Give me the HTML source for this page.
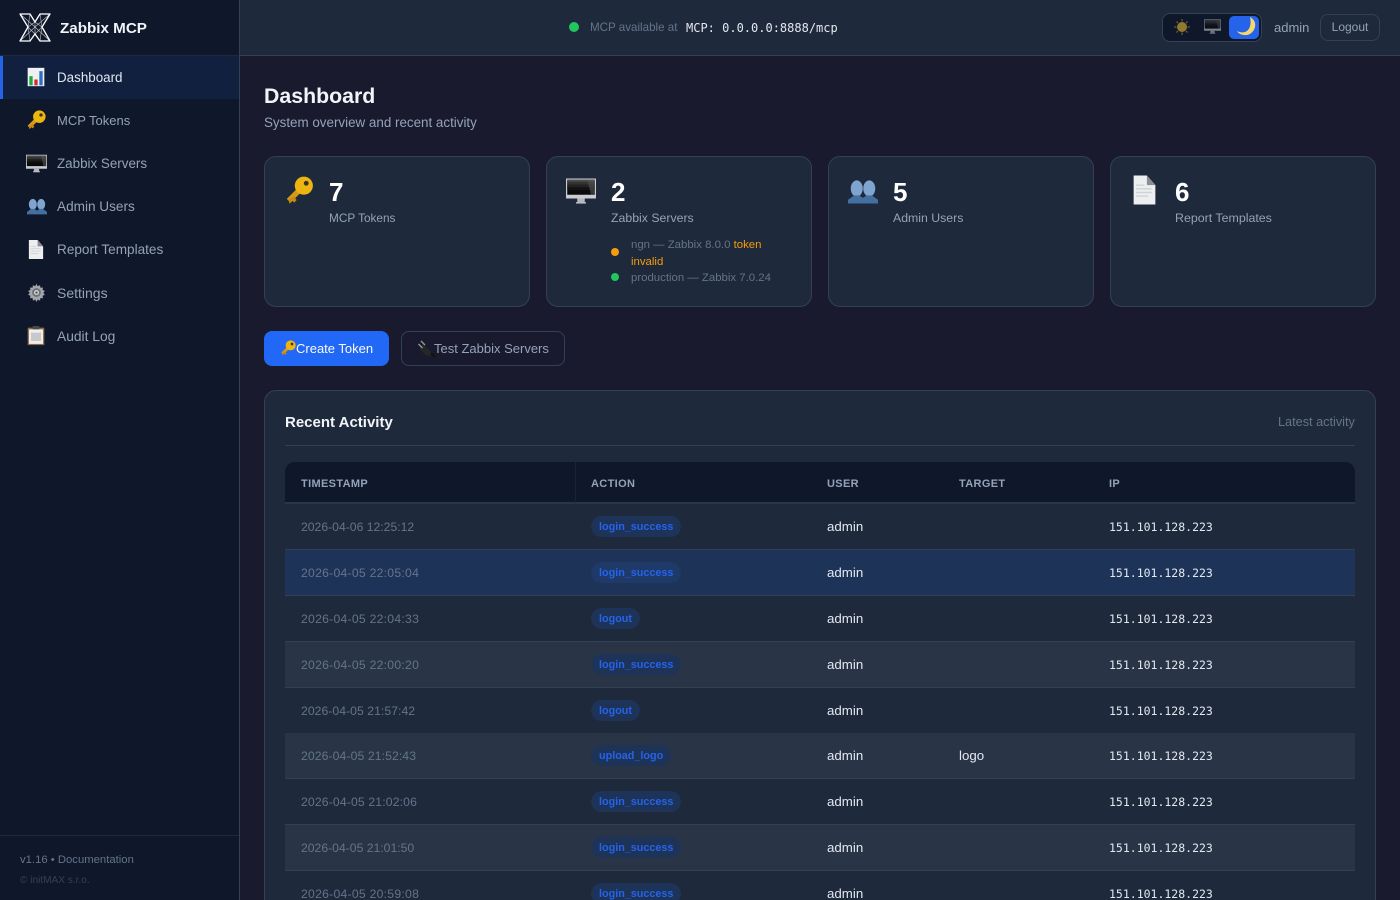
<!DOCTYPE html>
<html lang="en"><head><meta charset="utf-8"><title>Zabbix MCP</title>
<style>
*{box-sizing:border-box}
html,body{margin:0;padding:0;width:1400px;height:900px;overflow:hidden;background:#1a1a2e;font-family:"Liberation Sans",sans-serif;color:#e2e8f0}
#root{position:relative;width:1400px;height:900px;overflow:hidden;background:#1a1a2e}
.a{position:absolute;white-space:nowrap}
.t{position:absolute;white-space:nowrap;line-height:16px}
svg{position:absolute;overflow:visible}
#side{position:absolute;left:0;top:0;width:240px;height:900px;background:#0f172a;border-right:1px solid #334155}
#top{position:absolute;left:240px;top:0;width:1160px;height:56px;background:#1e293b;border-bottom:1px solid #334155}
.nav{font-size:13.6px;color:#94a3b8;left:57px}
.card{position:absolute;top:156px;width:266px;height:151px;background:#1e293b;border:1px solid #334155;border-radius:12px}
.num{font-size:26px;font-weight:700;color:#fff;line-height:30px;position:absolute;top:177px}
.lbl{font-size:12.3px;color:#94a3b8;top:210px}
#panel{position:absolute;left:264px;top:390px;width:1112px;height:540px;background:#1e293b;border:1px solid #334155;border-radius:12px}
.row{position:absolute;left:285px;width:1070px;height:46px;border-bottom:1px solid #334155}
.row.s{background:#293546}
.row.h{background:#1e3358}
.ts{position:absolute;left:16px;top:15px;font-size:12.2px;color:#64748b;line-height:16px;white-space:nowrap}
.bd{position:absolute;left:306px;top:12px;height:21px;border-radius:11px;background:#1e3358;color:#2563eb;font-size:10.8px;font-weight:700;line-height:23px;padding:0 8px;white-space:nowrap}
.row.h .bd{background:#1f3a68}
.us{position:absolute;left:542px;top:15px;font-size:13.3px;color:#e2e8f0;line-height:16px}
.tg{position:absolute;left:674px;top:15px;font-size:13.3px;color:#e2e8f0;line-height:16px}
.ip{position:absolute;left:824px;top:15px;font-family:"DejaVu Sans Mono",monospace;font-size:11.5px;color:#e2e8f0;line-height:16px;white-space:nowrap}
.th{position:absolute;top:476px;font-size:11px;font-weight:700;color:#94a3b8;letter-spacing:.35px;line-height:16px;white-space:nowrap}
</style></head><body><div id="root">
<svg width="0" height="0" style="position:absolute"><defs>
<symbol id="chart" viewBox="0 0 24 24"><rect x="2" y="1" width="20" height="22" fill="#eef1f4"/><rect x="4" y="11" width="4" height="11" fill="#22a83a"/><rect x="10" y="15" width="4" height="7" fill="#cf2e2e"/><rect x="16" y="5" width="4" height="17" fill="#2a6fc9"/></symbol>
<symbol id="key" viewBox="0 0 24 24"><path d="M12 12L3.500 20.500" stroke="#d69a14" stroke-width="4.500"/><path d="M4 23l2.500-2.500 1.500 1.500 2-2-2-3-4.500 2z" fill="#c98a12"/><circle cx="16" cy="8" r="7.500" fill="#ecb512"/><circle cx="18" cy="6" r="2" fill="#3a3320"/></symbol>
<symbol id="mon" viewBox="0 0 24 24"><rect x="0" y="2" width="24" height="16" fill="#c9ccd0"/><rect x="1" y="3" width="22" height="12" fill="#0a0a0a"/><rect x="1" y="3" width="22" height="2" fill="#4a4a4a"/><rect x="1" y="5" width="22" height="2" fill="#343434"/><rect x="1" y="7" width="22" height="2" fill="#222"/><rect x="1" y="9" width="22" height="2" fill="#141414"/><path d="M17 3h6v12h-3z" fill="#555" opacity=".6"/><rect x="9" y="18" width="6" height="3" fill="#b4b7bb"/><rect x="8" y="21" width="8" height="1" fill="#d4d6d9"/></symbol>
<symbol id="users" viewBox="0 0 24 24"><ellipse cx="7" cy="10" rx="4.800" ry="6.500" fill="#7ea4cf"/><ellipse cx="17" cy="10" rx="4.800" ry="6.500" fill="#7ea4cf"/><path d="M0 22v-3l5-3.500h4l3 2 3-2h4l5 3.500v3z" fill="#44709f"/></symbol>
<symbol id="doc" viewBox="0 0 24 24"><path d="M3 0h11l7 8v16H3z" fill="#eceef0"/><path d="M14 0l7 8h-7z" fill="#8b8d90"/><path d="M5 8h7M5 11h13M5 14h13M5 17h10" stroke="#cfd2d5" stroke-width="1.200"/></symbol>
<symbol id="gear" viewBox="0 0 24 24"><path d="M12 1l1.500 3 3-1.200.5 3.200 3.300-.3-.7 3.200 3 1.100-2 2.500 2 2.500-3 1.100.7 3.200-3.300-.3-.5 3.200-3-1.200-1.500 3-1.500-3-3 1.200-.5-3.200-3.300.3.700-3.200-3-1.100 2-2.500-2-2.500 3-1.100-.7-3.200 3.300.3.500-3.200 3 1.200z" fill="#a3a6aa"/><circle cx="12" cy="12" r="5.500" fill="#6d7074"/><circle cx="12" cy="12" r="3.200" fill="#d3d5d8"/><circle cx="12" cy="12" r="1.500" fill="#555"/></symbol>
<symbol id="clip" viewBox="0 0 24 24"><rect x="2" y="2" width="20" height="21" rx="1" fill="#8a6a3f"/><rect x="3.500" y="4" width="17" height="17.500" fill="#eeeeee"/><rect x="6" y="8" width="12" height="10" fill="#c6c8ca"/><rect x="8" y="0" width="8" height="4" fill="#4a4a4a"/></symbol>
</defs></svg>

<div id="side"></div>
<div class="a" style="left:0;top:55px;width:239px;height:1px;background:#1e293b"></div>
<svg style="left:19px;top:13px" width="32" height="29" viewBox="0 0 32 29" fill="none" stroke="#fff" stroke-width="1.300" stroke-linejoin="round"><path d="M1 1l10 0 5 8 5-8 10 0-8 13 8 14-10 0-5-7-5 7-10 0 8-14z"/><path d="M9 14l7-5 7 5-7 7zM16 9v12M11 1l-2 13 2 14M21 1l2 13-2 14M1 1l15 13 15-13M1 28l15-14 15 14" stroke-width=".6" opacity=".75"/></svg>
<div class="t" style="left:60px;top:20px;font-size:15.2px;font-weight:700;color:#f1f5f9;line-height:18px">Zabbix MCP</div>

<div class="a" style="left:0;top:56px;width:239px;height:43px;background:#12203f"></div>
<div class="a" style="left:0;top:56px;width:3px;height:43px;background:#2563eb"></div>
<svg style="left:26px;top:67px" width="20" height="20"><use href="#chart"/></svg>
<div class="t nav" style="top:70px;color:#e2e8f0;font-size:13.4px">Dashboard</div>
<svg style="left:26px;top:110px" width="20" height="20"><use href="#key"/></svg>
<div class="t nav" style="top:113px;font-size:13px">MCP Tokens</div>
<svg style="left:26px;top:153px" width="21" height="21"><use href="#mon"/></svg>
<div class="t nav" style="top:156px;font-size:13.4px">Zabbix Servers</div>
<svg style="left:27px;top:196px" width="20" height="20"><use href="#users"/></svg>
<div class="t nav" style="top:199px">Admin Users</div>
<svg style="left:26px;top:240px" width="20" height="19"><use href="#doc"/></svg>
<div class="t nav" style="top:242px">Report Templates</div>
<svg style="left:27px;top:283px" width="19" height="19"><use href="#gear"/></svg>
<div class="t nav" style="top:285px;font-size:14px">Settings</div>
<svg style="left:26px;top:326px" width="20" height="20"><use href="#clip"/></svg>
<div class="t nav" style="top:329px;font-size:13.8px">Audit Log</div>

<div class="a" style="left:0;top:835px;width:239px;height:1px;background:#1e293b"></div>
<div class="t" style="left:20px;top:852px;font-size:11.3px;color:#64748b">v1.16 • Documentation</div>
<div class="t" style="left:20px;top:873px;font-size:10.1px;color:#334155">© initMAX s.r.o.</div>

<div id="top"></div>
<div class="a" style="left:569px;top:22px;width:10px;height:10px;border-radius:50%;background:#22c55e"></div>
<div class="t" style="left:590px;top:20px;font-size:11.6px;color:#64748b">MCP available at</div>
<div class="t" style="left:686px;top:20px;font-family:'DejaVu Sans Mono',monospace;font-size:12px;color:#e2e8f0">MCP: 0.0.0.0:8888/mcp</div>

<div class="a" style="left:1162px;top:13px;width:100px;height:29px;background:#0f172a;border:1px solid #334155;border-radius:8px"></div>
<svg style="left:1173px;top:18px" width="18" height="18" viewBox="0 0 18 18"><circle cx="9" cy="9" r="5" fill="#8f7a30"/><path d="M9 1v2.500M9 14.500v2.500M1 9h2.500M14.500 9h2.500M3.500 3.500l1.500 1.500M13 13l1.500 1.500M3.500 14.500l1.500-1.500M13 5l1.500-1.500" stroke="#6a5a2c" stroke-width="1.300"/></svg>
<svg style="left:1204px;top:18px;opacity:.6" width="17" height="17"><use href="#mon"/></svg>
<div class="a" style="left:1229px;top:16px;width:30px;height:23px;background:#2563eb;border-radius:5px"></div>
<svg style="left:1236px;top:17px" width="21" height="20" viewBox="0 0 21 20"><path d="M14 0c4 2 6 6 5 10-1 5-6 9-11 8-3 0-6-2-7-4 4 2 8 2 11-1 3-3 3-9 2-13z" fill="#f6d76b"/></svg>
<div class="t" style="left:1274px;top:20px;font-size:13px;color:#94a3b8">admin</div>
<div class="a" style="left:1320px;top:14px;width:60px;height:27px;border:1px solid #334155;border-radius:8px;font-size:12px;color:#94a3b8;text-align:center;line-height:25px">Logout</div>

<div class="t" style="left:264px;top:84px;font-size:21.3px;font-weight:700;color:#f1f5f9;line-height:24px">Dashboard</div>
<div class="t" style="left:264px;top:115px;font-size:13.4px;color:#94a3b8">System overview and recent activity</div>

<div class="card" style="left:264px"></div>
<div class="card" style="left:546px"></div>
<div class="card" style="left:828px"></div>
<div class="card" style="left:1110px"></div>

<svg style="left:284px;top:176px" width="30" height="29"><use href="#key"/></svg>
<div class="num" style="left:329px">7</div>
<div class="t lbl" style="left:329px;font-size:11.8px">MCP Tokens</div>

<svg style="left:566px;top:176px" width="30" height="30"><use href="#mon"/></svg>
<div class="num" style="left:611px">2</div>
<div class="t lbl" style="left:611px">Zabbix Servers</div>
<div class="a" style="left:611px;top:248px;width:8px;height:8px;border-radius:50%;background:#f59e0b"></div>
<div class="t" style="left:631px;top:237px;font-size:11.4px;color:#64748b">ngn — Zabbix 8.0.0 <span style="color:#f59e0b">token</span></div>
<div class="t" style="left:631px;top:254px;font-size:11.4px;color:#f59e0b">invalid</div>
<div class="a" style="left:611px;top:273px;width:8px;height:8px;border-radius:50%;background:#22c55e"></div>
<div class="t" style="left:631px;top:270px;font-size:11.4px;color:#64748b">production — Zabbix 7.0.24</div>

<svg style="left:848px;top:176px" width="30" height="30"><use href="#users"/></svg>
<div class="num" style="left:893px">5</div>
<div class="t lbl" style="left:893px">Admin Users</div>

<svg style="left:1130px;top:175px" width="29" height="30"><use href="#doc"/></svg>
<div class="num" style="left:1175px">6</div>
<div class="t lbl" style="left:1175px;font-size:12.4px">Report Templates</div>

<div class="a" style="left:264px;top:331px;width:125px;height:35px;background:#2168f6;border-radius:8px"></div>
<svg style="left:280px;top:340px" width="16" height="16"><use href="#key"/></svg>
<div class="t" style="left:296px;top:341px;font-size:13px;color:#f8fafc">Create Token</div>
<div class="a" style="left:401px;top:331px;width:164px;height:35px;border:1px solid #334155;border-radius:8px"></div>
<svg style="left:418px;top:340px" width="17" height="17" viewBox="0 0 17 17"><path d="M5 4l9 9-2 3-4-.5-6-6 .5-3.500z" fill="#262626"/><path d="M3 1l4 4M0.500 4l4 4" stroke="#9a9a9a" stroke-width="1.300"/><path d="M13 13l4 4" stroke="#111" stroke-width="2"/></svg>
<div class="t" style="left:434px;top:341px;font-size:13px;color:#94a3b8">Test Zabbix Servers</div>

<div id="panel"></div>
<div class="t" style="left:285px;top:414px;font-size:15px;font-weight:700;color:#f1f5f9;line-height:18px">Recent Activity</div>
<div class="t" style="left:1278px;top:414px;font-size:12.7px;color:#64748b">Latest activity</div>
<div class="a" style="left:285px;top:445px;width:1070px;height:1px;background:#334155"></div>

<div class="a" style="left:285px;top:462px;width:1070px;height:42px;background:#0f172a;border-radius:10px 10px 0 0;border-bottom:2px solid #293548"></div>
<div class="a" style="left:575px;top:462px;width:1px;height:41px;background:#1a2436"></div>
<div class="th" style="left:301px">TIMESTAMP</div>
<div class="th" style="left:591px">ACTION</div>
<div class="th" style="left:827px">USER</div>
<div class="th" style="left:959px">TARGET</div>
<div class="th" style="left:1109px">IP</div>

<div class="row" style="top:504px"><div class="ts">2026-04-06 12:25:12</div><div class="bd">login_success</div><div class="us">admin</div><div class="ip">151.101.128.223</div></div>
<div class="row h" style="top:550px"><div class="ts" style="letter-spacing:.26px">2026-04-05 22:05:04</div><div class="bd">login_success</div><div class="us">admin</div><div class="ip">151.101.128.223</div></div>
<div class="row" style="top:596px"><div class="ts" style="letter-spacing:.26px">2026-04-05 22:04:33</div><div class="bd">logout</div><div class="us">admin</div><div class="ip">151.101.128.223</div></div>
<div class="row s" style="top:642px"><div class="ts" style="letter-spacing:.26px">2026-04-05 22:00:20</div><div class="bd">login_success</div><div class="us">admin</div><div class="ip">151.101.128.223</div></div>
<div class="row" style="top:688px"><div class="ts" style="letter-spacing:.05px">2026-04-05 21:57:42</div><div class="bd">logout</div><div class="us">admin</div><div class="ip">151.101.128.223</div></div>
<div class="row s" style="top:733px"><div class="ts" style="letter-spacing:.1px">2026-04-05 21:52:43</div><div class="bd">upload_logo</div><div class="us">admin</div><div class="tg">logo</div><div class="ip">151.101.128.223</div></div>
<div class="row" style="top:779px"><div class="ts" style="letter-spacing:.15px">2026-04-05 21:02:06</div><div class="bd">login_success</div><div class="us">admin</div><div class="ip">151.101.128.223</div></div>
<div class="row s" style="top:825px"><div class="ts">2026-04-05 21:01:50</div><div class="bd">login_success</div><div class="us">admin</div><div class="ip">151.101.128.223</div></div>
<div class="row" style="top:871px"><div class="ts" style="letter-spacing:.26px">2026-04-05 20:59:08</div><div class="bd">login_success</div><div class="us">admin</div><div class="ip">151.101.128.223</div></div>
</div></body></html>
